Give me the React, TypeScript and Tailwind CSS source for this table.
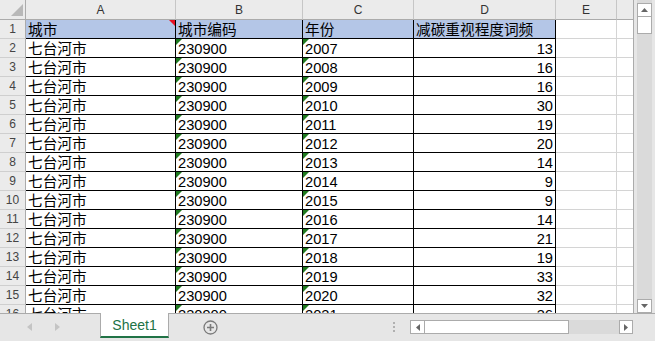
const values = [13, 16, 16, 30, 19, 20, 14, 9, 9, 14, 21, 19, 33, 32, 36];

const rows = values.map((v, i) => ({
  city: "七台河市",
  code: "230900",
  year: String(2007 + i),
  freq: v,
}));

const colLetters = ["A", "B", "C", "D", "E", ""];

// little green "number stored as text" flag in the cell corner
function TextFlag() {
  return (
    <span className="absolute left-0 top-0 h-[6px] w-[6px] bg-[#1f7a1f] [clip-path:polygon(0_0,100%_0,0_100%)]" />
  );
}

function CommentFlag() {
  return (
    <span className="absolute right-0 top-0 h-[6px] w-[6px] bg-[#e81123] [clip-path:polygon(0_0,100%_0,100%_100%)]" />
  );
}

const cell =
  "relative overflow-hidden whitespace-nowrap border-r border-b border-black pl-[2px] pt-[2px] leading-[16px] text-[14.67px] text-black";
const blank = "border-r border-b border-[#d4d4d4] bg-white";
const rowHead =
  "flex items-center justify-center border-r border-b border-r-[#ababab] border-b-[#cfcfcf] bg-[#ebebeb] text-[12px] text-[#444]";

function Grid() {
  return (
    <div className="grid h-[313px] w-[634px] grid-cols-[26px_150px_127px_111px_142px_61px_16px] grid-rows-[20px] auto-rows-[19px] overflow-hidden border-r border-[#ababab] bg-white font-['Liberation_Sans','Noto_Sans_CJK_SC',sans-serif]">
      {/* corner + column letters */}
      <div className="relative border-r border-b border-[#ababab] bg-[#ebebeb]">
        <svg className="absolute inset-0" width="26" height="20" viewBox="0 0 26 20">
          <polygon points="11,16 23,16 23,4" fill="#b8b8b8" />
        </svg>
      </div>
      {colLetters.map((c, i) => (
        <div
          key={i}
          className={`flex items-center justify-center border-b border-b-[#ababab] bg-[#ebebeb] text-[12px] text-[#333] ${
            i < 5 ? "border-r border-r-[#c6c6c6]" : ""
          }`}
        >
          {c}
        </div>
      ))}

      {/* row 1: field names */}
      <div className={rowHead}>1</div>
      <div className={`${cell} bg-[#b4c6e7]`}>
        城市
        <CommentFlag />
      </div>
      <div className={`${cell} bg-[#b4c6e7]`}>城市编码</div>
      <div className={`${cell} bg-[#b4c6e7]`}>年份</div>
      <div className={`${cell} bg-[#b4c6e7]`}>减碳重视程度词频</div>
      <div className={blank} />
      <div className="border-b border-[#d4d4d4]" />

      {rows.map((r, i) => (
        <div key={r.year} className="contents">
          <div className={rowHead}>{i + 2}</div>
          <div className={cell}>{r.city}</div>
          <div className={cell}>
            <TextFlag />
            {r.code}
          </div>
          <div className={cell}>
            <TextFlag />
            {r.year}
          </div>
          <div className={`${cell} pr-[2px] text-right`}>{r.freq}</div>
          <div className={blank} />
          <div className="border-b border-[#d4d4d4]" />
        </div>
      ))}
    </div>
  );
}

function VScroll() {
  return (
    <div className="flex h-[313px] w-[21px] bg-[#e6e6e6] pl-[3px]">
      <div className="flex h-full w-[15px] flex-col bg-[#dadada] pt-[3px]">
        <div className="flex h-[14px] items-center justify-center border border-[#ababab] bg-white">
          <svg width="7" height="4" viewBox="0 0 7 4">
            <polygon points="0,4 7,4 3.5,0" fill="#666" />
          </svg>
        </div>
        <div className="-mt-px h-[18px] border border-[#ababab] bg-white" />
        <div className="flex-1" />
        <div className="flex h-[14px] items-center justify-center border border-[#ababab] bg-white">
          <svg width="7" height="4" viewBox="0 0 7 4">
            <polygon points="0,0 7,0 3.5,4" fill="#666" />
          </svg>
        </div>
      </div>
    </div>
  );
}

function TabBar() {
  return (
    <div className="flex h-[28px] items-start border-t border-[#ababab] bg-[#e6e6e6] font-['Liberation_Sans',sans-serif]">
      {/* sheet navigation arrows */}
      <div className="flex h-[26px] w-[100px] items-center">
        <svg className="ml-[27px]" width="5" height="8" viewBox="0 0 5 8">
          <polygon points="5,0 5,8 0,4" fill="#c4c4c4" />
        </svg>
        <svg className="ml-[23px]" width="5" height="8" viewBox="0 0 5 8">
          <polygon points="0,0 0,8 5,4" fill="#c4c4c4" />
        </svg>
      </div>

      <div className="-mt-px flex h-[25px] w-[69px] items-center justify-center border-x border-b-2 border-x-[#ababab] border-b-[#217346] bg-white pt-[1px] text-[14px] text-[#217346]">
        Sheet1
      </div>

      <div className="ml-[34px] flex h-[26px] items-center">
        <svg width="15" height="15" viewBox="0 0 15 15">
          <circle cx="7.5" cy="7.5" r="6.5" fill="none" stroke="#7a7a7a" strokeWidth="1.3" />
          <path d="M7.5 4v7M4 7.5h7" stroke="#7a7a7a" strokeWidth="1.6" />
        </svg>
      </div>

      <div className="flex-1" />

      <div className="flex h-[26px] flex-col items-center justify-center gap-[2px]">
        <span className="h-[2px] w-[2px] bg-[#b0b0b0]" />
        <span className="h-[2px] w-[2px] bg-[#b0b0b0]" />
        <span className="h-[2px] w-[2px] bg-[#b0b0b0]" />
      </div>

      {/* horizontal scroll bar */}
      <div className="ml-[15px] mt-[6px] flex h-[14px] w-[223px]">
        <div className="flex w-[15px] items-center justify-center border border-[#ababab] bg-white">
          <svg width="4" height="7" viewBox="0 0 4 7">
            <polygon points="4,0 4,7 0,3.5" fill="#666" />
          </svg>
        </div>
        <div className="-ml-px w-[145px] border border-[#ababab] bg-white" />
        <div className="flex-1 bg-[#dadada]" />
        <div className="flex w-[14px] items-center justify-center border border-[#ababab] bg-white">
          <svg width="4" height="7" viewBox="0 0 4 7">
            <polygon points="0,0 0,7 4,3.5" fill="#666" />
          </svg>
        </div>
      </div>
      <div className="w-[22px]" />
    </div>
  );
}

export default function App() {
  return (
    <div className="flex h-[341px] w-[655px] flex-col overflow-hidden bg-white">
      <div className="flex">
        <Grid />
        <VScroll />
      </div>
      <TabBar />
    </div>
  );
}
